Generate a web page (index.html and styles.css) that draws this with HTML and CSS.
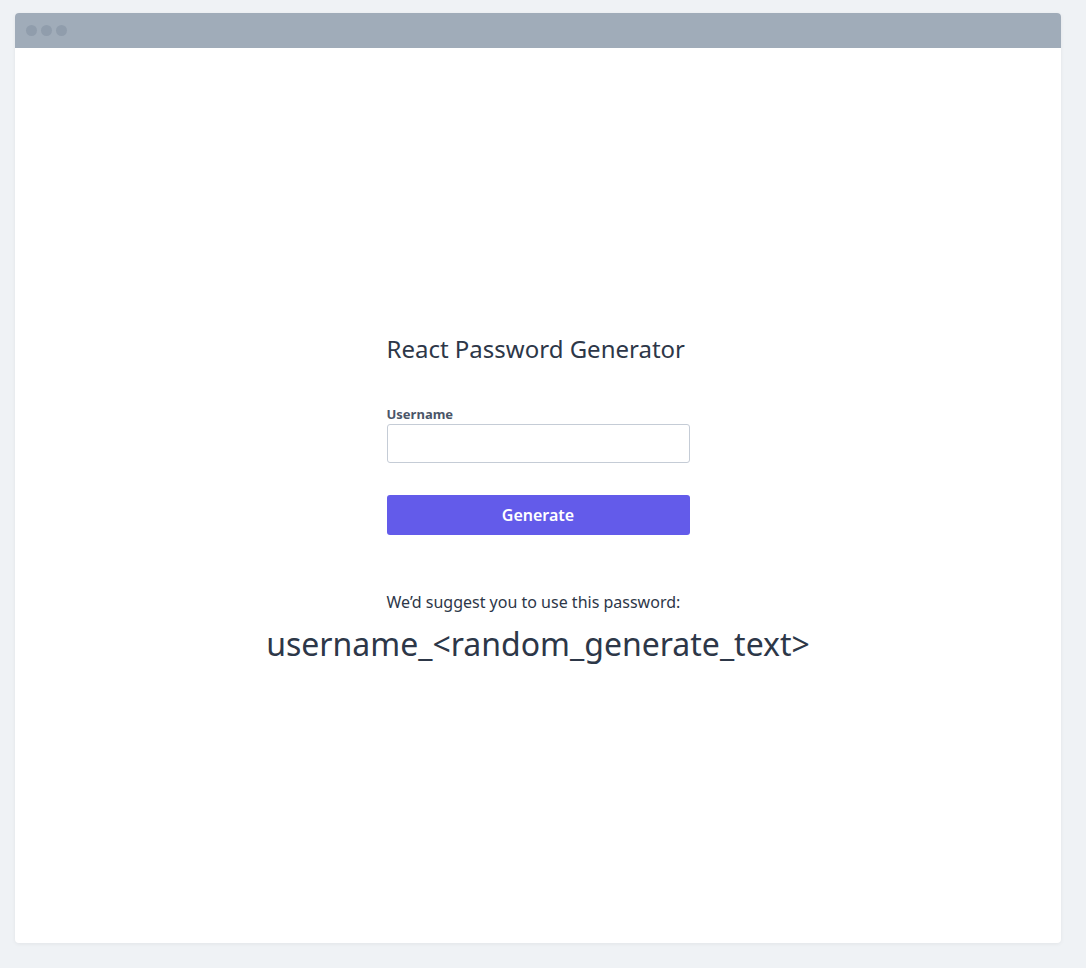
FILE: index.html
```html
<!DOCTYPE html>
<html lang="en">
<head>
<meta charset="utf-8">
<title>React Password Generator</title>
<link rel="stylesheet" href="styles.css">
</head>
<body>
<div class="window">
  <div class="titlebar">
    <span class="dot"></span><span class="dot"></span><span class="dot"></span>
  </div>
  <div class="content">
    <div class="app">
      <div class="form">
        <h1 class="title">React Password Generator</h1>
        <label class="label" for="username">Username</label>
        <input class="input" id="username" type="text">
        <button class="button" type="button">Generate</button>
      </div>
      <p class="suggest">We’d suggest you to use this password:</p>
      <p class="password">username_&lt;random_generate_text&gt;</p>
    </div>
  </div>
</div>
</body>
</html>
```

FILE: styles.css
```css
* { box-sizing: border-box; }
html, body { margin: 0; padding: 0; }
body {
  background: #eff2f5;
  font-family: "Noto Sans", "DejaVu Sans", sans-serif;
  color: #2d3748;
  padding: 13px 25px 25px 15px;
}
.window {
  width: 1046px;
  height: 930px;
  background: #ffffff;
  border-radius: 4px;
  overflow: hidden;
  box-shadow: 0 1px 4px rgba(0,0,0,0.06);
  display: flex;
  flex-direction: column;
}
.titlebar {
  height: 35px;
  background: #a0acb9;
  display: flex;
  align-items: center;
  gap: 4px;
  padding-left: 11px;
}
.dot {
  width: 11px;
  height: 11px;
  border-radius: 50%;
  background: #909dac;
}
.content {
  flex: 1;
  display: flex;
  align-items: center;
  justify-content: center;
}
.app {
  display: flex;
  flex-direction: column;
  align-items: center;
  padding-top: 7px;
}
.form {
  width: 303px;
  display: flex;
  flex-direction: column;
}
.title {
  margin: 0 0 42px 0;
  font-size: 24px;
  font-weight: 400;
  line-height: 30px;
  text-align: left;
  white-space: nowrap;
  color: #2d3748;
}
.label {
  font-size: 13px;
  font-weight: 700;
  color: #4a5568;
  line-height: 16px;
  margin-bottom: 2px;
}
.input {
  height: 39px;
  border: 1px solid #c5ccd6;
  border-radius: 3px;
  font-size: 16px;
  padding: 0 10px;
  margin: 0 0 32px 0;
}
.button {
  height: 40px;
  border: none;
  border-radius: 3px;
  background: #635bea;
  color: #ffffff;
  font-family: inherit;
  font-size: 16px;
  font-weight: 600;
}
.suggest {
  width: 303px;
  margin: 57px 0 0 0;
  font-size: 16px;
  line-height: 20px;
  white-space: nowrap;
  text-align: left;
  color: #2d3748;
}
.password {
  margin: 12px 0 0 0;
  font-size: 32px;
  line-height: 40px;
  color: #2d3748;
}
```
